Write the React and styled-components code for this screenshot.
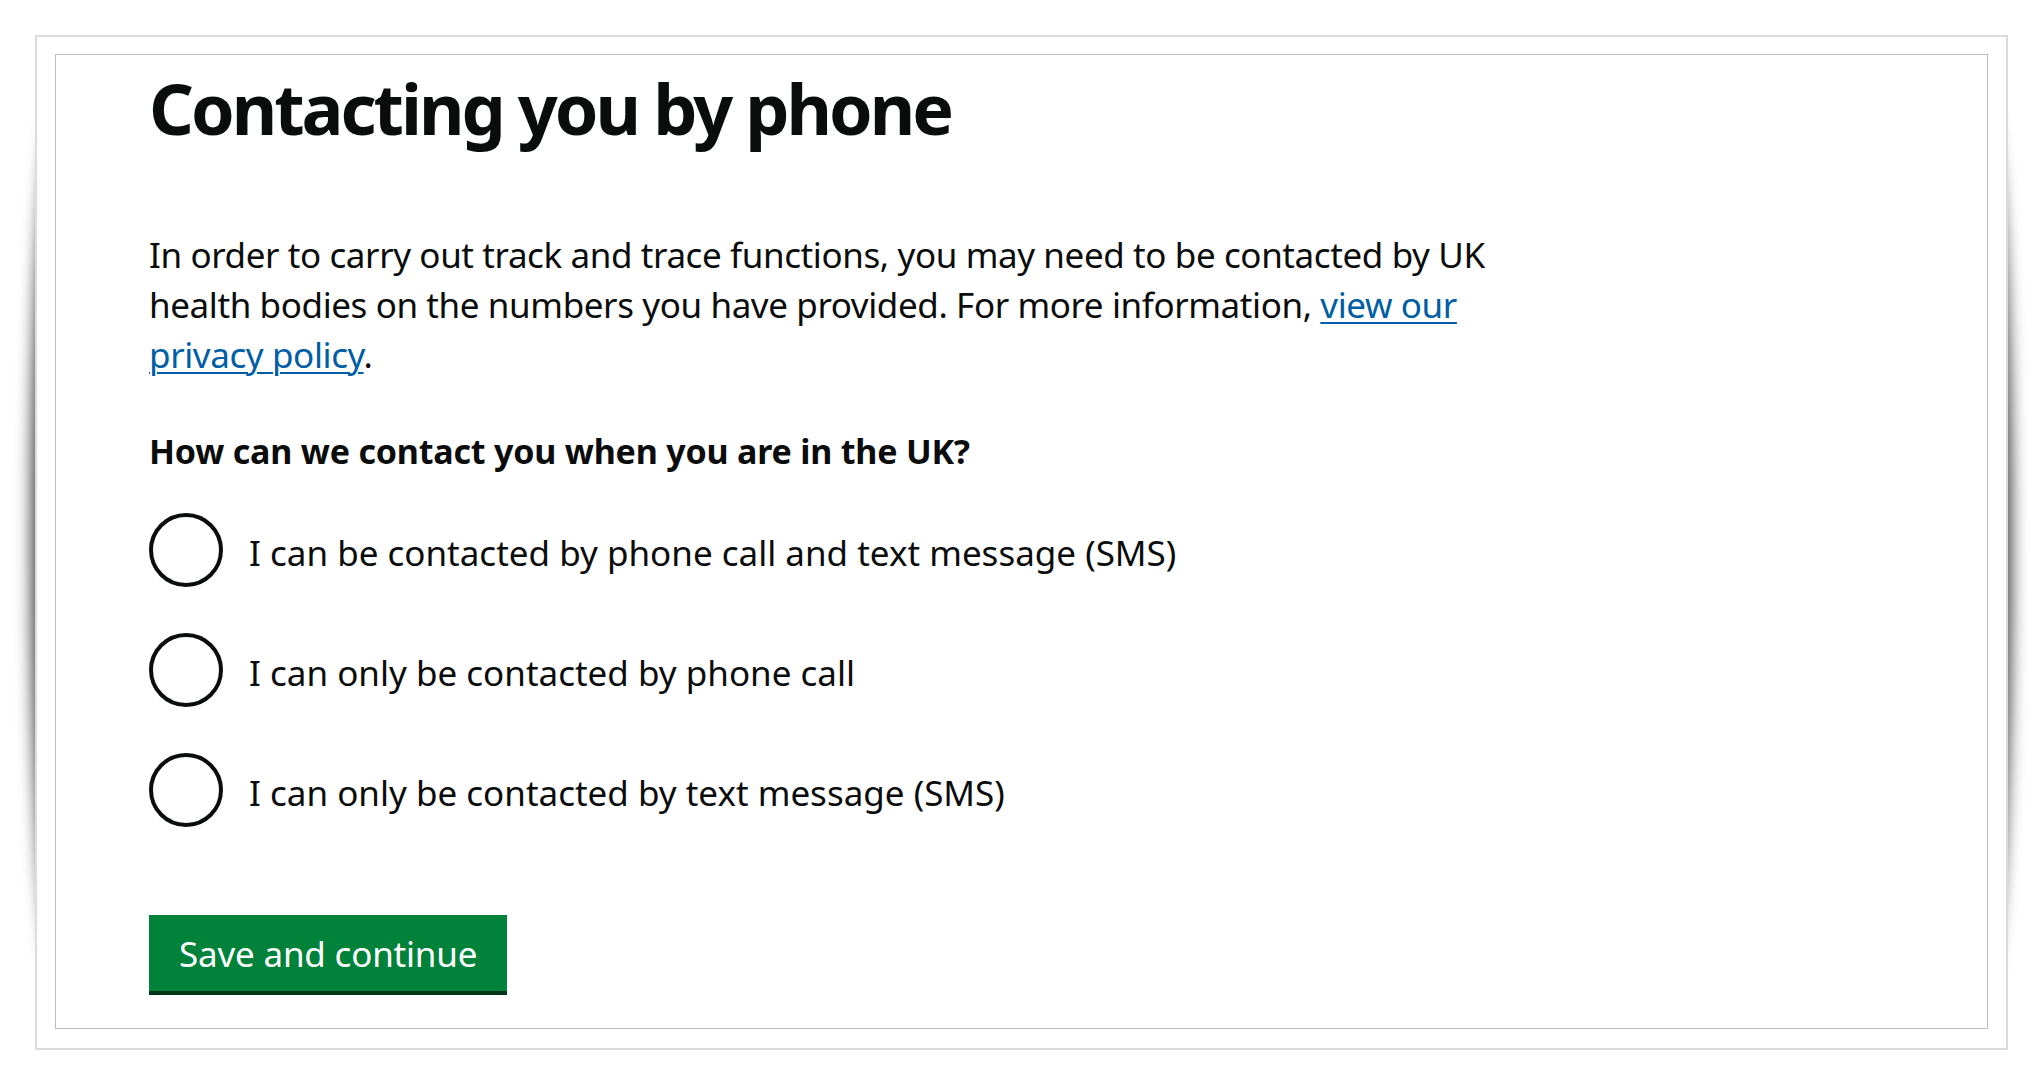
import React from "react";
import styled, { createGlobalStyle } from "styled-components";

const GlobalStyle = createGlobalStyle`
  html {
    background: #ffffff;
  }
  html, body {
    margin: 0;
    padding: 0;
  }
  body {
    font-family: "Noto Sans", "Open Sans", Arial, sans-serif;
    color: #0b0c0c;
  }
  * { box-sizing: border-box; }
`;

const Page = styled.div`
  height: 100vh;
  padding: 35px;
  display: flex;
  flex-direction: column;
`;

const Frame = styled.div`
  position: relative;
  flex: 1;
  display: flex;
  flex-direction: column;
  background: #ffffff;
  border: 2px solid #dcdcdc;
  padding: 17px 18px 19px 18px;

  &::before {
    content: "";
    position: absolute;
    z-index: -1;
    top: 70px;
    bottom: 70px;
    left: -2px;
    right: -2px;
    border-radius: 24px / 460px;
    box-shadow: 0 0 16px 4px rgba(0, 0, 0, 0.72);
  }
`;

const Inner = styled.main`
  flex: 1;
  border: 1px solid #bdbdbd;
  padding: 0 0 0 93px;
`;

const Heading = styled.h1`
  margin: 13px 0 0;
  font-size: 70px;
  line-height: 80px;
  font-weight: 700;
  letter-spacing: -3px;
`;

const Body = styled.p`
  margin: 82px 0 0;
  max-width: 1400px;
  font-size: 35px;
  line-height: 50px;
  font-weight: 400;
  letter-spacing: -0.4px;
`;

const Link = styled.a`
  color: #005ea5;
  text-decoration: underline;
  text-decoration-thickness: 2px;
  text-underline-offset: 4px;
`;

const Fieldset = styled.fieldset`
  margin: 51px 0 0;
  padding: 0;
  border: 0;
`;

const Legend = styled.legend`
  padding: 0;
  font-size: 34px;
  line-height: 40px;
  font-weight: 700;
  letter-spacing: -0.2px;
`;

const Options = styled.div`
  margin-top: 42px;
  display: flex;
  flex-direction: column;
  gap: 46px;
`;

const Option = styled.label`
  display: flex;
  align-items: center;
  gap: 26px;
  font-size: 35px;
  line-height: 50px;
  cursor: pointer;
`;

const OptionText = styled.span`
  padding-top: 5px;
`;

const Radio = styled.span`
  flex: none;
  width: 74px;
  height: 74px;
  border: 4px solid #0b0c0c;
  border-radius: 50%;
  background: #ffffff;
`;

const Button = styled.button`
  margin-top: 88px;
  display: inline-block;
  padding: 14px 30px 12px;
  border: 0;
  border-radius: 0;
  background: #00823b;
  box-shadow: 0 4px 0 #003618;
  color: #ffffff;
  font-family: "Noto Sans", "Open Sans", Arial, sans-serif;
  font-size: 35px;
  line-height: 50px;
  letter-spacing: -0.2px;
  cursor: pointer;
`;

const options = [
  "I can be contacted by phone call and text message (SMS)",
  "I can only be contacted by phone call",
  "I can only be contacted by text message (SMS)",
];

export default function App() {
  return (
    <>
      <GlobalStyle />
      <Page>
        <Frame>
          <Inner>
            <Heading>Contacting you by phone</Heading>
            <Body>
              In order to carry out track and trace functions, you may need to be
              contacted by UK health bodies on the numbers you have provided. For
              more information, <Link href="#">view our privacy policy</Link>.
            </Body>
            <Fieldset>
              <Legend>How can we contact you when you are in the UK?</Legend>
              <Options>
                {options.map((o) => (
                  <Option key={o}>
                    <Radio />
                    <OptionText>{o}</OptionText>
                  </Option>
                ))}
              </Options>
            </Fieldset>
            <Button type="button">Save and continue</Button>
          </Inner>
        </Frame>
      </Page>
    </>
  );
}
